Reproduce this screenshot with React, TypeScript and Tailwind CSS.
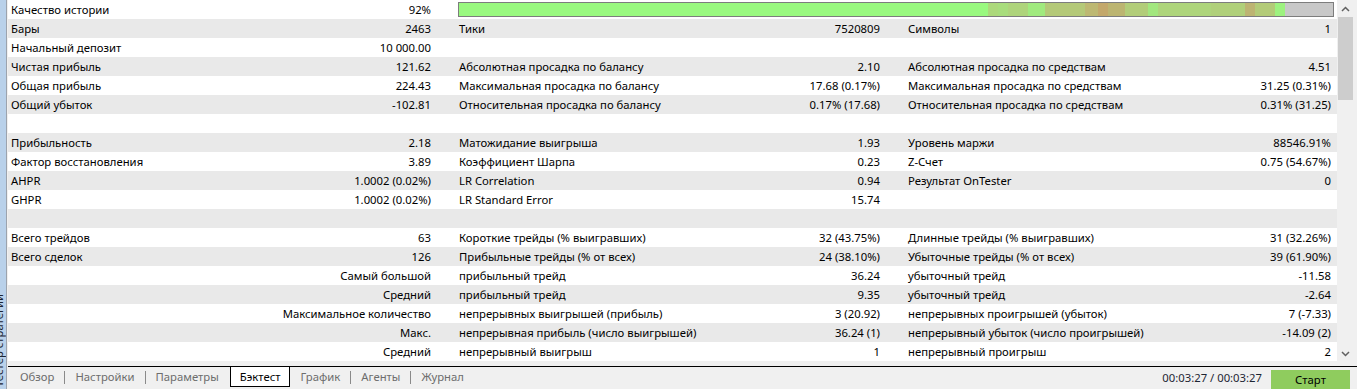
import React from 'react';

type Cell = { label?: string; value?: string; right?: boolean };

const rows: Cell[][] = [
    [{ label: 'Качество истории', value: '92%' }],
    [{ label: 'Бары', value: '2463' }, { label: 'Тики', value: '7520809' }, { label: 'Символы', value: '1' }],
    [{ label: 'Начальный депозит', value: '10 000.00' }, {}, {}],
    [
        { label: 'Чистая прибыль', value: '121.62' },
        { label: 'Абсолютная просадка по балансу', value: '2.10' },
        { label: 'Абсолютная просадка по средствам', value: '4.51' },
    ],
    [
        { label: 'Общая прибыль', value: '224.43' },
        { label: 'Максимальная просадка по балансу', value: '17.68 (0.17%)' },
        { label: 'Максимальная просадка по средствам', value: '31.25 (0.31%)' },
    ],
    [
        { label: 'Общий убыток', value: '-102.81' },
        { label: 'Относительная просадка по балансу', value: '0.17% (17.68)' },
        { label: 'Относительная просадка по средствам', value: '0.31% (31.25)' },
    ],
    [{}, {}, {}],
    [
        { label: 'Прибыльность', value: '2.18' },
        { label: 'Матожидание выигрыша', value: '1.93' },
        { label: 'Уровень маржи', value: '88546.91%' },
    ],
    [
        { label: 'Фактор восстановления', value: '3.89' },
        { label: 'Коэффициент Шарпа', value: '0.23' },
        { label: 'Z-Счет', value: '0.75 (54.67%)' },
    ],
    [
        { label: 'AHPR', value: '1.0002 (0.02%)' },
        { label: 'LR Correlation', value: '0.94' },
        { label: 'Результат OnTester', value: '0' },
    ],
    [{ label: 'GHPR', value: '1.0002 (0.02%)' }, { label: 'LR Standard Error', value: '15.74' }, {}],
    [{}, {}, {}],
    [
        { label: 'Всего трейдов', value: '63' },
        { label: 'Короткие трейды (% выигравших)', value: '32 (43.75%)' },
        { label: 'Длинные трейды (% выигравших)', value: '31 (32.26%)' },
    ],
    [
        { label: 'Всего сделок', value: '126' },
        { label: 'Прибыльные трейды (% от всех)', value: '24 (38.10%)' },
        { label: 'Убыточные трейды (% от всех)', value: '39 (61.90%)' },
    ],
    [
        { value: 'Самый большой', right: true },
        { label: 'прибыльный трейд', value: '36.24' },
        { label: 'убыточный трейд', value: '-11.58' },
    ],
    [
        { value: 'Средний', right: true },
        { label: 'прибыльный трейд', value: '9.35' },
        { label: 'убыточный трейд', value: '-2.64' },
    ],
    [
        { value: 'Максимальное количество', right: true },
        { label: 'непрерывных выигрышей (прибыль)', value: '3 (20.92)' },
        { label: 'непрерывных проигрышей (убыток)', value: '7 (-7.33)' },
    ],
    [
        { value: 'Макс.', right: true },
        { label: 'непрерывная прибыль (число выигрышей)', value: '36.24 (1)' },
        { label: 'непрерывный убыток (число проигрышей)', value: '-14.09 (2)' },
    ],
    [
        { value: 'Средний', right: true },
        { label: 'непрерывный выигрыш', value: '1' },
        { label: 'непрерывный проигрыш', value: '2' },
    ],
];

// quality of history, drawn as coloured segments
const segments = [
    { w: 'w-[529px]', c: 'bg-[#99f97f]' },
    { w: 'w-[10px]', c: 'bg-[#acd97b]' },
    { w: 'w-[10px]', c: 'bg-[#a8dd7c]' },
    { w: 'w-[20px]', c: 'bg-[#aed47b]' },
    { w: 'w-[17px]', c: 'bg-[#a0ea7e]' },
    { w: 'w-[40px]', c: 'bg-[#b4c978]' },
    { w: 'w-[13px]', c: 'bg-[#bdb872]' },
    { w: 'w-[10px]', c: 'bg-[#c3a86b]' },
    { w: 'w-[17px]', c: 'bg-[#bcb571]' },
    { w: 'w-[23px]', c: 'bg-[#b2cd79]' },
    { w: 'w-[10px]', c: 'bg-[#a2e77e]' },
    { w: 'w-[53px]', c: 'bg-[#aed57b]' },
    { w: 'w-[34px]', c: 'bg-[#b0d07a]' },
    { w: 'w-[10px]', c: 'bg-[#bdb472]' },
    { w: 'w-[20px]', c: 'bg-[#b3cb78]' },
    { w: 'w-[10px]', c: 'bg-[#9df27f]' },
    { w: 'flex-1', c: 'bg-[#c8c8c8]' },
];

const colClass = [
    'w-[441px] pl-[3px] pr-[18px]',
    'w-[449px] pl-[10px] pr-[18px]',
    'w-[439px] pl-[10px] pr-[6px]',
];

const Row: React.FC<{ cells: Cell[]; index: number }> = ({ cells, index }) => {
    const bg = index % 2 === 1 ? 'bg-[#e9e9e9]' : 'bg-white';

    if (index === 0) {
        return (
            <div className={`flex h-[19px] ${bg}`}>
                <div className={`flex justify-between ${colClass[0]}`}>
                    <span>{cells[0].label}</span>
                    <span>{cells[0].value}</span>
                </div>
                <div className="flex-1 pl-[9px] pr-[3px] pt-[2px]">
                    <div className="flex h-[15px] border border-[#7d7d7d]">
                        {segments.map((s, i) => (
                            <div key={i} className={`${s.w} ${s.c} h-full`} />
                        ))}
                    </div>
                </div>
            </div>
        );
    }

    return (
        <div className={`flex h-[19px] ${bg}`}>
            {cells.map((c, i) => (
                <div
                    key={i}
                    className={`flex whitespace-nowrap ${c.right ? 'justify-end' : 'justify-between'} ${colClass[i]}`}
                >
                    {c.label && <span>{c.label}</span>}
                    {c.value && <span>{c.value}</span>}
                </div>
            ))}
        </div>
    );
};

const tabs = ['Обзор', 'Настройки', 'Параметры', 'Бэктест', 'График', 'Агенты', 'Журнал'];

const App: React.FC = () => {
    return (
        <div className="flex w-[1357px] h-[389px] overflow-hidden bg-[#f0f0f0] text-[11.3px] leading-[19px] text-black font-['Noto_Sans','Liberation_Sans',sans-serif]">
            {/* docked side caption */}
            <div className="relative w-[7px] h-full shrink-0 bg-[#b9d1ea] border-r border-[#9ca3ad] overflow-hidden">
                <span className="absolute bottom-[2px] left-[-8px] [writing-mode:vertical-rl] rotate-180 leading-[14px] whitespace-nowrap text-[#1c2433]">
                    Тестер стратегии
                </span>
            </div>

            <div className="flex flex-col flex-1 pl-px">
                <div className="flex h-[366px]">
                    <div className="w-[1329px]">
                        {rows.map((r, i) => (
                            <Row key={i} cells={r} index={i} />
                        ))}
                    </div>

                    {/* scrollbar */}
                    <div className="flex flex-col items-center w-[17px] h-[362px] bg-[#f0f0f0]">
                        <div className="flex items-center justify-center h-[17px] w-full">
                            <svg width="9" height="6" viewBox="0 0 9 6">
                                <path d="M1 5 L4.5 1.5 L8 5" fill="none" stroke="#606060" strokeWidth="1.5" />
                            </svg>
                        </div>
                        <div className="w-[15px] h-[83px] bg-[#cdcdcd]" />
                        <div className="flex-1" />
                        <div className="flex items-center justify-center h-[17px] w-full">
                            <svg width="9" height="6" viewBox="0 0 9 6">
                                <path d="M1 1 L4.5 4.5 L8 1" fill="none" stroke="#606060" strokeWidth="1.5" />
                            </svg>
                        </div>
                    </div>
                </div>

                {/* bottom tabs */}
                <div className="flex items-start flex-1 border-t border-black">
                    <div className="flex items-center pl-[2px] h-[20px]">
                        {tabs.map((t, i) => {
                            const active = t === 'Бэктест';
                            const sep = i > 0 && i !== 3 && i !== 4;
                            return (
                                <React.Fragment key={t}>
                                    {sep && <div className="w-px h-[13px] bg-[#8a8a8a]" />}
                                    {active ? (
                                        <div className="h-[20px] px-[9px] ml-[1px] bg-white border-x border-b border-black text-black leading-[19px]">
                                            {t}
                                        </div>
                                    ) : (
                                        <div className="px-[10px] text-[#6d6d6d] leading-[20px]">{t}</div>
                                    )}
                                </React.Fragment>
                            );
                        })}
                    </div>
                    <div className="flex-1" />
                    <div className="text-[#1d2533] mr-[9px] leading-[22px]">00:03:27 / 00:03:27</div>
                    <button className="w-[79px] h-[19px] mt-[3px] mr-[7px] bg-[#8fcc5e] text-black leading-[19px]">
                        Старт
                    </button>
                </div>
            </div>
        </div>
    );
};

export default App;
